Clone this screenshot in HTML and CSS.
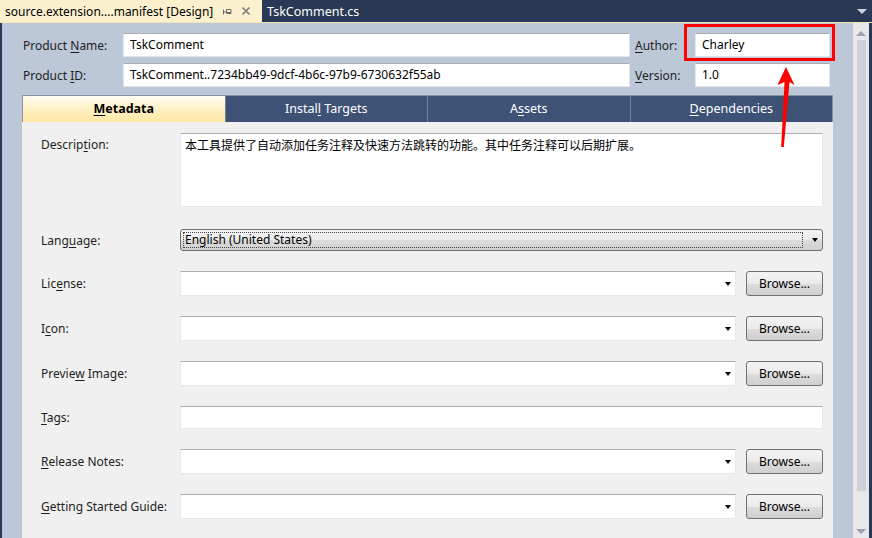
FILE: index.html
```html
<!DOCTYPE html>
<html>
<head>
<meta charset="utf-8">
<link rel="stylesheet" href="styles.css">
</head>
<body>
<div class="app">
  <div class="doc-tabs">
    <div class="doc-tab active">
      <span class="doc-title">source.extension....manifest [Design]</span>
      <svg class="pin" width="12" height="12" viewBox="0 0 12 12"><path d="M2.5 3.5V8.5M2.5 6H5.5M5.5 3.5H10V7.5H5.5Z M5.5 6.5H10" fill="none" stroke="#6d6d6d" stroke-width="1"/></svg>
      <svg class="close" width="10" height="10" viewBox="0 0 10 10"><path d="M1.5 1.5L8.5 8.5M8.5 1.5L1.5 8.5" stroke="#7a7a7a" stroke-width="1.6"/></svg>
    </div>
    <div class="doc-tab">TskComment.cs</div>
    <div class="doc-spacer"></div>
    <svg class="doc-menu" width="10" height="6" viewBox="0 0 10 6"><path d="M0 0H10L5 5Z" fill="#ced4de"/></svg>
  </div>
  <div class="accent"></div>
  <div class="body">
    <div class="content">
      <div class="head-grid">
        <label class="hlabel">Product <u>N</u>ame:</label>
        <div class="tbox">TskComment</div>
        <label class="hlabel right"><u>A</u>uthor:</label>
        <div class="tbox">Charley</div>
        <label class="hlabel">Product <u>I</u>D:</label>
        <div class="tbox">TskComment..7234bb49-9dcf-4b6c-97b9-6730632f55ab</div>
        <label class="hlabel right"><u>V</u>ersion:</label>
        <div class="tbox">1.0</div>
      </div>
      <div class="tabs">
        <div class="tab active"><span><u>M</u>etadata</span></div>
        <div class="tab"><span>Instal<u>l</u> Targets</span></div>
        <div class="tab"><span>A<u>s</u>sets</span></div>
        <div class="tab"><span><u>D</u>ependencies</span></div>
      </div>
      <div class="panel">
        <div class="row row-desc">
          <label class="plabel top">Descrip<u>t</u>ion:</label>
          <div class="field textarea">本工具提供了自动添加任务注释及快速方法跳转的功能。其中任务注释可以后期扩展。</div>
        </div>
        <div class="row row-lang">
          <label class="plabel">Lang<u>u</u>age:</label>
          <div class="field langcombo"><span class="focus">English (United States)</span><span class="caret"></span></div>
        </div>
        <div class="row">
          <label class="plabel">Lic<u>e</u>nse:</label>
          <div class="field combo"><span class="caret"></span></div>
          <button class="browse">Browse...</button>
        </div>
        <div class="row">
          <label class="plabel">I<u>c</u>on:</label>
          <div class="field combo"><span class="caret"></span></div>
          <button class="browse">Browse...</button>
        </div>
        <div class="row">
          <label class="plabel">Previe<u>w</u> Image:</label>
          <div class="field combo"><span class="caret"></span></div>
          <button class="browse">Browse...</button>
        </div>
        <div class="row row-tags">
          <label class="plabel"><u>T</u>ags:</label>
          <div class="field tags"></div>
        </div>
        <div class="row">
          <label class="plabel"><u>R</u>elease Notes:</label>
          <div class="field combo"><span class="caret"></span></div>
          <button class="browse">Browse...</button>
        </div>
        <div class="row">
          <label class="plabel"><u>G</u>etting Started Guide:</label>
          <div class="field combo"><span class="caret"></span></div>
          <button class="browse">Browse...</button>
        </div>
      </div>
    </div>
    <div class="vscroll">
      <div class="sarrow up"></div>
      <div class="thumb"></div>
      <div class="sarrow down"></div>
    </div>
  </div>
  <div class="callout"></div>
  <svg class="arrow" width="872" height="538" viewBox="0 0 872 538"><polygon points="786,67 794.5,85 789.5,82 783.8,147 781.2,147 784.5,82 777.5,85" fill="#ff0000"/></svg>
</div>
</body>
</html>
```
FILE: styles.css
```css
* { box-sizing: border-box; }
html, body { margin: 0; padding: 0; }
body {
  width: 872px; height: 538px; overflow: hidden;
  font-family: "Noto Sans", "Noto Sans CJK SC", sans-serif;
  font-size: 12px; color: #1e1e1e;
}
u { text-decoration: underline; text-underline-offset: 2px; }
.app { position: relative; width: 872px; height: 538px; background: #293955; display: flex; flex-direction: column; }
.doc-tabs { height: 22px; display: flex; align-items: center; background: #293955; }
.doc-tab { height: 22px; display: flex; align-items: center; color: #ffffff; padding: 0 6px 0 5px; font-size: 12.5px; }
.doc-tab.active { width: 262px; background: #fcf1cf; color: #000; padding-left: 5px; font-size: 12px; }
.doc-title { flex: 1; white-space: nowrap; }
.pin { margin-right: 8px; margin-top: 1px; }
.close { margin-right: 5px; }
.doc-spacer { flex: 1; }
.doc-menu { margin-right: 5px; margin-top: 2px; }
.accent { height: 1px; background: #f3e3b3; }
.body { flex: 1; display: flex; min-height: 0; }
.content { flex: 1; background: #bcc7d8; margin-left: 2px; padding: 10px 20px 0 20px; display: flex; flex-direction: column; min-width: 0; }
.head-grid { display: grid; grid-template-columns: 100px 507px 65px 135px; row-gap: 6px; grid-auto-rows: 24px; align-items: center; margin-left: 1px; }
.hlabel.right { padding-left: 5px; }
.tbox { height: 24px; background: #fff; border: 1px solid #e2e6ec; border-top-color: #abadb3; padding: 0 6px; line-height: 22px; white-space: nowrap; overflow: hidden; color: #000; }
.tabs { margin-top: 8px; height: 27px; display: flex; background: #3e5276; border: 1px solid #8591a6; border-bottom: none; }
.tab { flex: 1; display: flex; align-items: center; justify-content: center; color: #fff; border-left: 1px solid #6f7f9c; font-size: 12.5px; padding-bottom: 2px; }
.tab:first-child { border-left: none; }
.tab.active { background: linear-gradient(#fffcf2, #fff1c4 50%, #ffe8a4); color: #000; font-weight: bold; }
.panel { flex: 1; background: #f0f0f0; padding: 11px 10px 0 19px; display: flex; flex-direction: column; }
.row { display: flex; align-items: center; height: 25px; margin-top: 20px; }
.row-desc { height: 74px; margin-top: 0; align-items: flex-start; }
.row-lang { height: 22px; margin-top: 22px; }
.row-tags { height: 23px; }
.plabel { width: 139px; flex: none; }
.plabel.top { padding-top: 3px; }
.field { flex: 1; height: 100%; background: #fff; border: 1px solid #e3e9ef; border-top-color: #abadb3; position: relative; }
.textarea { padding: 2px 4px; color: #000; }
.combo .caret, .langcombo .caret { position: absolute; right: 4px; top: 50%; margin-top: -2px; width: 0; height: 0; border-left: 3.5px solid transparent; border-right: 3.5px solid transparent; border-top: 4px solid #000; }
.langcombo { background: linear-gradient(#f3f3f3, #ebebeb 50%, #dddddd 51%, #cfcfcf); border: 1px solid #707070; border-radius: 3px; padding: 2px; display: flex; }
.langcombo .focus { flex: 1; border: 1px dotted #444; margin-right: 17px; padding-left: 1px; line-height: 14px; color: #000; }
.browse { flex: none; width: 77px; height: 25px; margin-left: 10px; font-family: inherit; font-size: 12px; color: #000; background: linear-gradient(#f3f3f3, #ebebeb 50%, #dddddd 51%, #cfcfcf); border: 1px solid #707070; border-radius: 3px; padding: 0; }
.vscroll { width: 16px; background: #e8e8ec; display: flex; flex-direction: column; align-items: center; margin-right: 3px; }
.sarrow { width: 0; height: 0; border-left: 5px solid transparent; border-right: 5px solid transparent; }
.sarrow.up { border-bottom: 5px solid #a0a2aa; margin-top: 8px; }
.sarrow.down { border-top: 5px solid #a0a2aa; margin-bottom: 4px; }
.thumb { width: 9px; flex: 1; margin: 4px 0 38px 1px; background: #d0d1d7; }
.callout { position: absolute; left: 684px; top: 24px; width: 151px; height: 37px; border: 3px solid #ff0000; }
.arrow { position: absolute; left: 0; top: 0; pointer-events: none; }
```
